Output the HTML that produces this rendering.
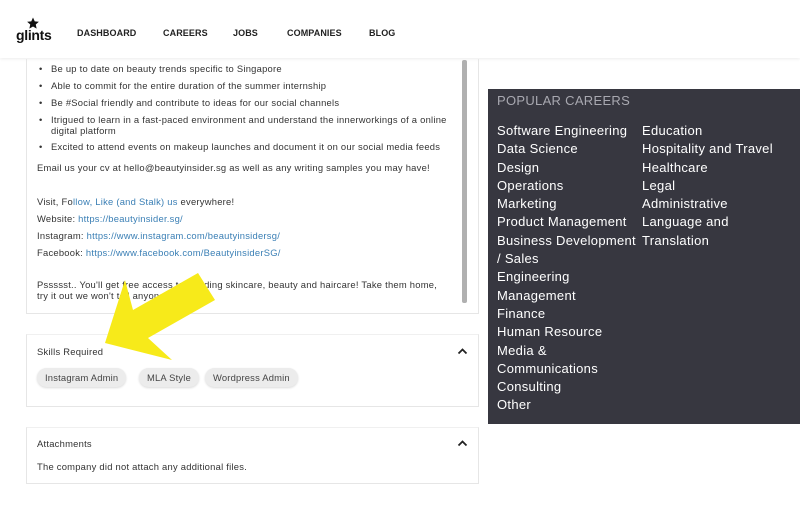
<!DOCTYPE html>
<html><head><style>
*{margin:0;padding:0;box-sizing:border-box}
body{width:800px;height:506px;background:#fff;font-family:"Liberation Sans",sans-serif;position:relative;overflow:hidden;color:#222}
.abs{position:absolute;white-space:nowrap}
.nav{font-size:9px;font-weight:bold;top:28px;color:#222;letter-spacing:.1px}
.t{font-size:9.4px;left:37px;color:#333;letter-spacing:.25px}
.b{font-size:9.4px;left:51px;color:#333;letter-spacing:.25px}
.dot{position:absolute;left:-12px;top:0}
a{color:#3a7fb5;text-decoration:none}
.card{position:absolute;left:26px;width:453px;border:1px solid #e6e6e6;border-top:none}
.tag{position:absolute;top:368px;height:19px;line-height:19px;background:#ececec;border-radius:10px;font-size:9.4px;letter-spacing:.2px;color:#444;padding:0 8px;box-shadow:0 1px 2px rgba(0,0,0,.15)}
.pc{position:absolute;left:488px;top:89px;width:312px;height:335px;background:#373740;color:#fff}
.pc div{font-size:13px;line-height:18.3px;letter-spacing:.3px}
</style></head><body>
<div class="abs" style="left:0;top:0;width:800px;height:58px;background:#fff;box-shadow:0 1px 3px rgba(0,0,0,.08)"></div>
<svg class="abs" style="left:26px;top:17px" width="14" height="13" viewBox="0 0 24 24"><path d="M12 1l3.2 7 7.6.8-5.7 5.1 1.6 7.5L12 17.6 5.3 21.4l1.6-7.5L1.2 8.8 8.8 8z" fill="#111"/></svg>
<div class="abs" style="left:16px;top:27px;font-size:14px;font-weight:bold;color:#111;letter-spacing:-.3px">glints</div>
<div class="abs nav" style="left:77px">DASHBOARD</div>
<div class="abs nav" style="left:163px">CAREERS</div>
<div class="abs nav" style="left:233px">JOBS</div>
<div class="abs nav" style="left:287px">COMPANIES</div>
<div class="abs nav" style="left:369px">BLOG</div>

<div class="card" style="top:59px;height:255px"></div>
<div class="abs" style="left:462px;top:60px;width:5px;height:243px;background:#b0b0b0;border-radius:2px"></div>
<div class="abs b" style="top:63px"><span class="dot">•</span>Be up to date on beauty trends specific to Singapore</div>
<div class="abs b" style="top:80px"><span class="dot">•</span>Able to commit for the entire duration of the summer internship</div>
<div class="abs b" style="top:97px"><span class="dot">•</span>Be #Social friendly and contribute to ideas for our social channels</div>
<div class="abs b" style="top:114px;line-height:11px"><span class="dot">•</span>Itrigued to learn in a fast-paced environment and understand the innerworkings of a online<br>digital platform</div>
<div class="abs b" style="top:141px"><span class="dot">•</span>Excited to attend events on makeup launches and document it on our social media feeds</div>
<div class="abs t" style="top:162px">Email us your cv at hello@beautyinsider.sg as well as any writing samples you may have!</div>
<div class="abs t" style="top:196px">Visit, Fo<a>llow, Like (and Stalk) us</a> everywhere!</div>
<div class="abs t" style="top:213px">Website: <a>https://beautyinsider.sg/</a></div>
<div class="abs t" style="top:230px">Instagram: <a>https://www.instagram.com/beautyinsidersg/</a></div>
<div class="abs t" style="top:247px">Facebook: <a>https://www.facebook.com/BeautyinsiderSG/</a></div>
<div class="abs t" style="top:279px;line-height:11px">Pssssst.. You'll get free access to trending skincare, beauty and haircare! Take them home,<br>try it out we won't tell anyone!</div>

<div class="card" style="top:334px;height:73px;border-top:1px solid #f0f0f0"></div>
<div class="abs t" style="top:346px">Skills Required</div>
<svg class="abs" style="left:457px;top:347px" width="11" height="8"><path d="M1.5 6.5L5.5 2.5 9.5 6.5" stroke="#222" stroke-width="1.8" fill="none"/></svg>
<div class="tag" style="left:37px">Instagram Admin</div>
<div class="tag" style="left:139px">MLA Style</div>
<div class="tag" style="left:205px">Wordpress Admin</div>

<div class="card" style="top:427px;height:57px;border-top:1px solid #f0f0f0"></div>
<div class="abs t" style="top:438px">Attachments</div>
<svg class="abs" style="left:457px;top:439px" width="11" height="8"><path d="M1.5 6.5L5.5 2.5 9.5 6.5" stroke="#222" stroke-width="1.8" fill="none"/></svg>
<div class="abs t" style="top:461px">The company did not attach any additional files.</div>

<svg class="abs" style="left:0;top:0" width="480" height="506"><polygon points="125,280 133,310 198,273 215,300 148,338 172,360 105,343" fill="#f7ea1a"/></svg>

<div class="pc">
<div style="position:absolute;left:9px;top:3px;color:#a8a8b0;font-size:13px">POPULAR CAREERS</div>
<div style="position:absolute;left:9px;top:33px">Software Engineering<br>Data Science<br>Design<br>Operations<br>Marketing<br>Product Management<br>Business Development<br>/ Sales<br>Engineering<br>Management<br>Finance<br>Human Resource<br>Media &amp;<br>Communications<br>Consulting<br>Other</div>
<div style="position:absolute;left:154px;top:33px">Education<br>Hospitality and Travel<br>Healthcare<br>Legal<br>Administrative<br>Language and<br>Translation</div>
</div>
</body></html>
